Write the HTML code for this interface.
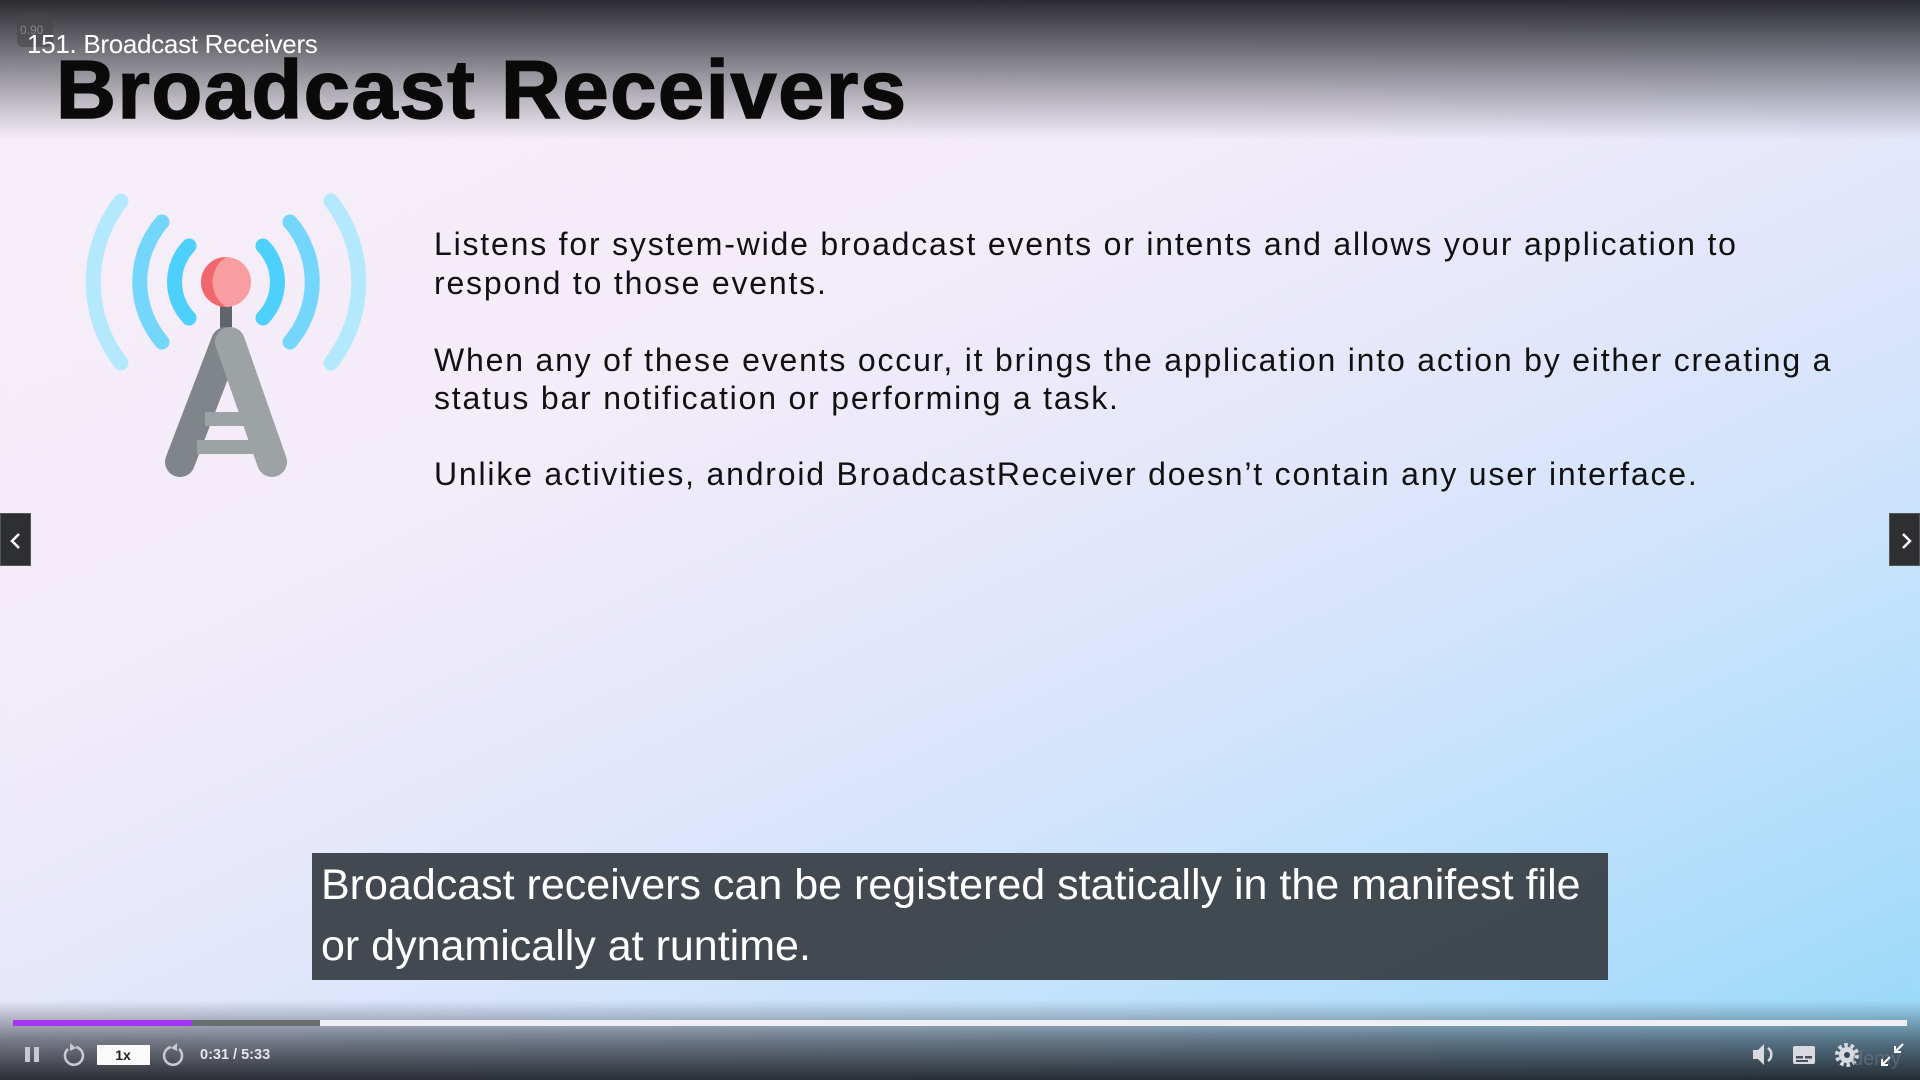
<!DOCTYPE html>
<html><head><meta charset="utf-8"><style>
*{margin:0;padding:0;box-sizing:border-box}
body{width:1920px;height:1080px;overflow:hidden;position:relative;font-family:"Liberation Sans",sans-serif;
background:linear-gradient(155deg,#f7eff8 0%,#f3ecf9 35%,#e2e6fb 55%,#c3e2fb 75%,#95d8fa 100%);}
.topfade{position:absolute;left:0;top:0;width:1920px;height:140px;background:linear-gradient(to bottom,rgba(32,33,38,0.95) 0%,rgba(60,62,68,0.6) 45%,rgba(255,255,255,0) 100%)}
.botfade{position:absolute;left:0;top:1000px;width:1920px;height:80px;background:linear-gradient(to bottom,rgba(30,33,40,0) 0%,rgba(30,33,40,0.55) 50%,rgba(28,30,36,0.92) 100%)}
.abs{position:absolute;white-space:nowrap}
.body{font-size:32px;color:#111;left:434px;letter-spacing:1.8px}
</style></head><body>
<div class="topfade"></div>
<div class="abs" style="left:17px;top:13px;width:36px;height:34px;background:rgba(70,70,75,0.6);border-radius:5px;color:#888;font-size:12px;padding:10px 3px">0.90</div>
<div class="abs" style="left:27px;top:29px;font-size:26px;color:#fff;letter-spacing:-0.3px">151. Broadcast Receivers</div>
<div class="abs" style="left:56px;top:45px;font-size:83px;font-weight:bold;color:#0a0a0a;letter-spacing:1.6px;line-height:90px;-webkit-text-stroke:1.5px #0a0a0a">Broadcast Receivers</div>

<svg class="abs" style="left:0;top:0" width="420" height="520" viewBox="0 0 420 520">
<g fill="none" stroke-linecap="round">
<path d="M121,201 A132 132 0 0 0 121,363" stroke="#b4e9fd" stroke-width="15"/>
<path d="M331,201 A132 132 0 0 1 331,363" stroke="#b4e9fd" stroke-width="15"/>
<path d="M162,222 A92 92 0 0 0 162,342" stroke="#74d6fb" stroke-width="15"/>
<path d="M290,222 A92 92 0 0 1 290,342" stroke="#74d6fb" stroke-width="15"/>
<path d="M189,246 A52 52 0 0 0 189,318" stroke="#4dd0fc" stroke-width="15"/>
<path d="M263,246 A52 52 0 0 1 263,318" stroke="#4dd0fc" stroke-width="15"/>
</g>
<rect x="220" y="305" width="12" height="32" fill="#5f6568"/>
<g stroke-linecap="round" stroke-width="30">
<line x1="226" y1="342" x2="180" y2="462" stroke="#7f8588"/>
<line x1="230" y1="342" x2="272" y2="462" stroke="#9da2a4"/>
</g>
<rect x="205" y="412" width="40" height="14" fill="#9da2a4"/>
<rect x="197" y="440" width="58" height="14" fill="#9da2a4"/>
<circle cx="226" cy="282" r="25" fill="#f99ea0"/>
<path d="M226,257 A25 25 0 0 0 226,307 A30 30 0 0 1 226,257Z" fill="#f0676d"/>
</svg>

<div class="abs body" style="top:226px">Listens for system-wide broadcast events or intents and allows your application to</div>
<div class="abs body" style="top:265px">respond to those events.</div>
<div class="abs body" style="top:342px">When any of these events occur, it brings the application into action by either creating a</div>
<div class="abs body" style="top:380px">status bar notification or performing a task.</div>
<div class="abs body" style="top:456px">Unlike activities, android BroadcastReceiver doesn’t contain any user interface.</div>

<div class="abs" style="left:0;top:513px;width:31px;height:53px;background:#2d2f33;border:1px solid #555"><svg width="31" height="53"><path d="M18,20 L11,27 L18,34" stroke="#fff" stroke-width="2.5" fill="none"/></svg></div>
<div class="abs" style="left:1889px;top:513px;width:31px;height:53px;background:#2d2f33;border:1px solid #555"><svg width="31" height="53"><path d="M13,20 L20,27 L13,34" stroke="#fff" stroke-width="2.5" fill="none"/></svg></div>

<div class="abs" style="left:312px;top:853px;width:1296px;height:127px;background:rgba(58,64,72,0.95)"></div>
<div class="abs" style="left:321px;top:855px;font-size:43px;color:#fff;line-height:61px">Broadcast receivers can be registered statically in the manifest file<br>or dynamically at runtime.</div>

<div class="botfade"></div>
<div class="abs" style="left:13px;top:1020px;width:1894px;height:6px;background:#eef0f6"></div>
<div class="abs" style="left:13px;top:1020px;width:307px;height:6px;background:#6b6f74"></div>
<div class="abs" style="left:13px;top:1020px;width:179px;height:6px;background:#a435f0"></div>

<svg class="abs" style="left:0;top:1035px" width="300" height="40">
<rect x="25" y="12" width="5" height="15" fill="#c8cacf"/><rect x="34" y="12" width="5" height="15" fill="#c8cacf"/>
<path d="M68,14 A9 9 0 1 0 76,12" stroke="#c8cacf" stroke-width="2.5" fill="none"/><path d="M70,8 L70,16 L76,13Z" fill="#c8cacf"/>
<rect x="97" y="10" width="53" height="20" fill="#fafafa"/>
<text x="123" y="25" font-family="Liberation Sans" font-weight="bold" font-size="14" fill="#222" text-anchor="middle">1x</text>
<path d="M179,14 A9 9 0 1 1 171,12" stroke="#c8cacf" stroke-width="2.5" fill="none"/><path d="M177,8 L177,16 L171,13Z" fill="#c8cacf"/>
<text x="200" y="24" font-family="Liberation Sans" font-weight="bold" font-size="14.5" fill="#e6e6ea">0:31 / 5:33</text>
</svg>

<svg class="abs" style="left:1740px;top:1035px" width="180" height="40">
<path d="M13,15 L18,15 L24,9 L24,30 L18,24 L13,24Z" fill="#d8dae0"/>
<path d="M28,13 A8 8 0 0 1 28,26" stroke="#d8dae0" stroke-width="2.5" fill="none"/>
<rect x="53" y="11" width="22" height="18" rx="2" fill="#d8dae0"/>
<rect x="56" y="21" width="7" height="2.5" fill="#44505c"/><rect x="65" y="21" width="7" height="2.5" fill="#44505c"/>
<rect x="56" y="25" width="12" height="2" fill="#44505c"/>
<circle cx="107" cy="20" r="8" fill="#d8dae0"/>
<circle cx="107" cy="20" r="10" fill="none" stroke="#d8dae0" stroke-width="4" stroke-dasharray="3.5 2.8"/>
<circle cx="107" cy="20" r="3" fill="#3a4655"/>
<text x="112" y="30" font-family="Liberation Sans" font-size="20" fill="rgba(120,130,140,0.5)">demy</text>
<path d="M142,30 L150,22 M142,24 L142,30 L148,30 M155,17 L163,9 M155,11 L155,17 L161,17" stroke="#fff" stroke-width="2" fill="none"/>
</svg>
</body></html>
